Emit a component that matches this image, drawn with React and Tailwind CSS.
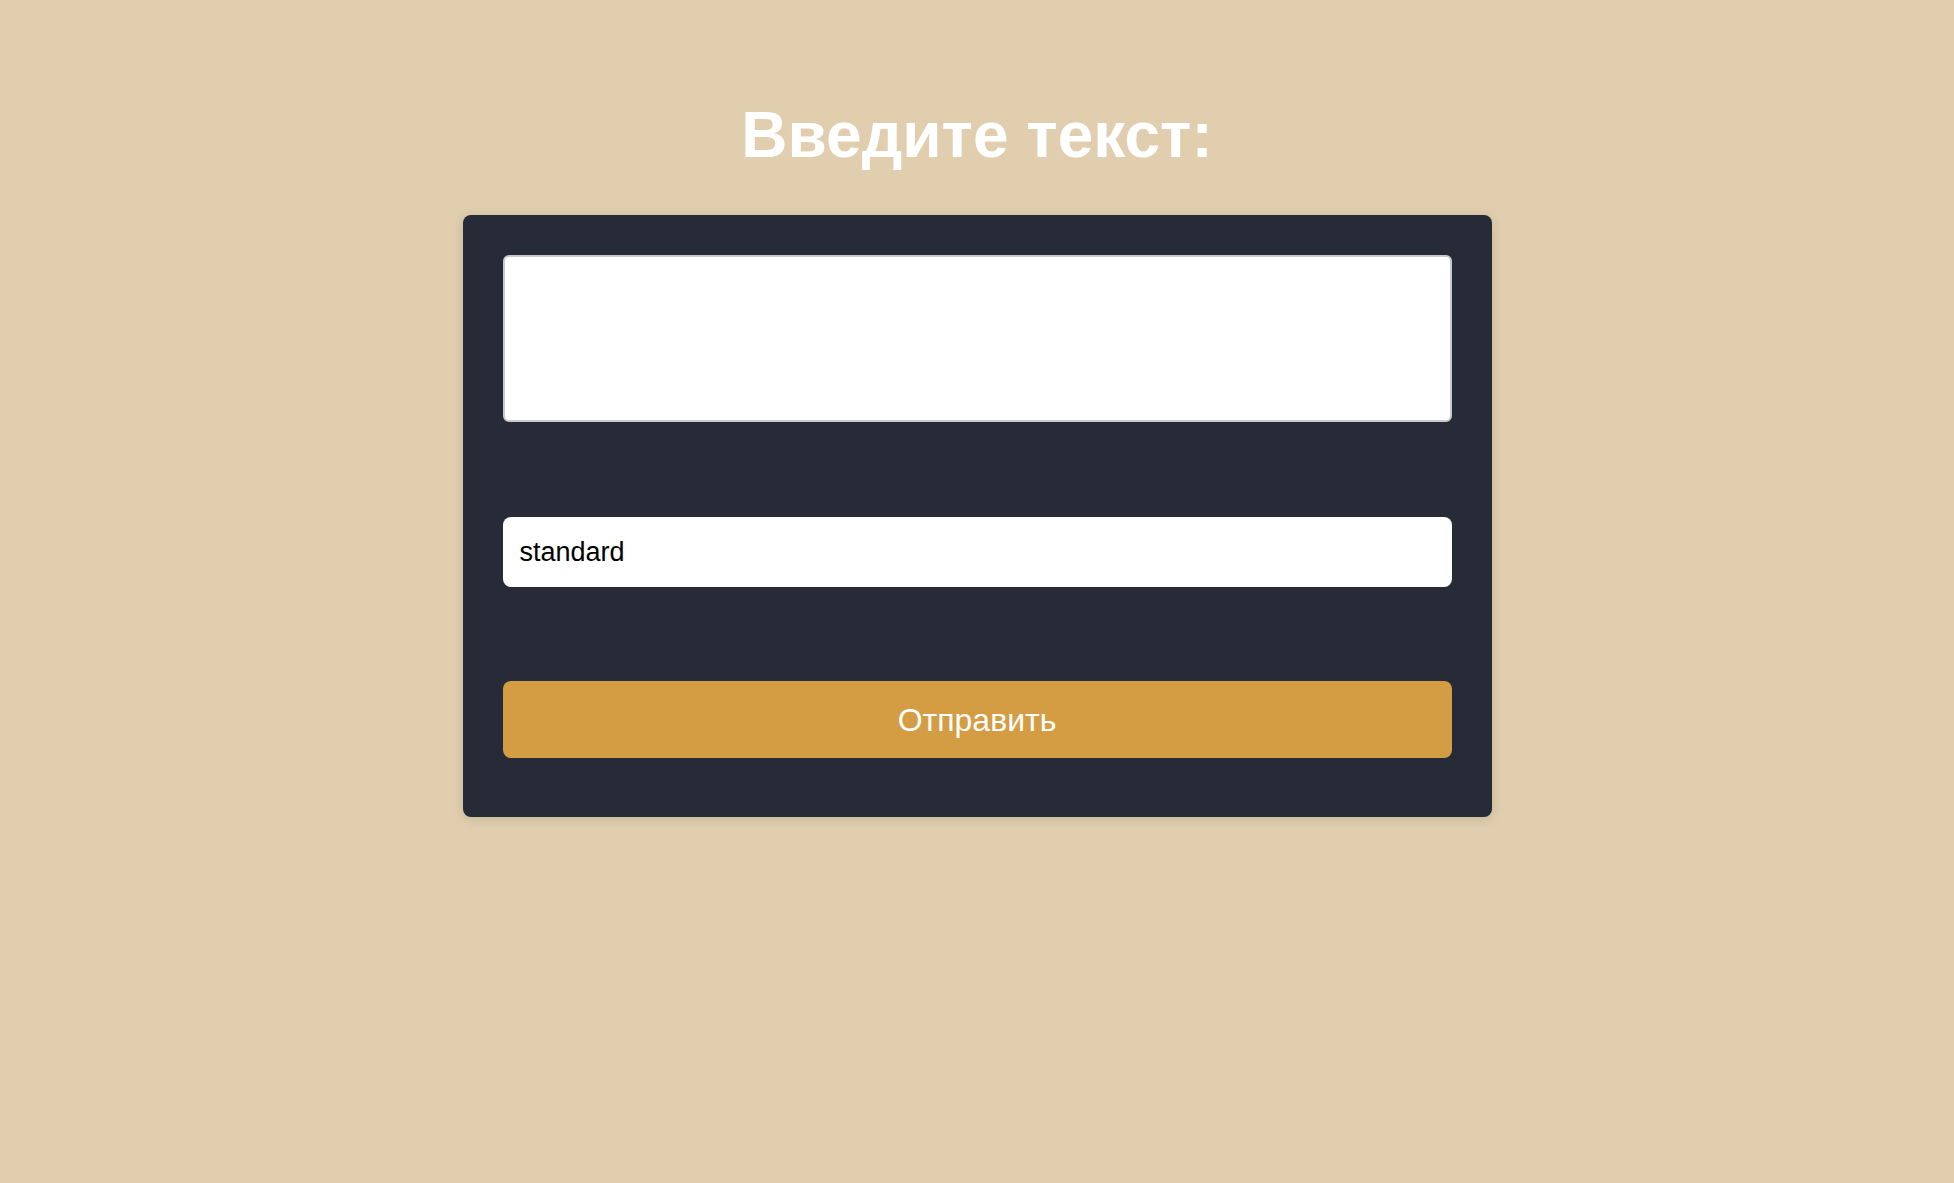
export default function App() {
  return (
    <div className="min-h-screen w-full bg-[#e0ceae] flex flex-col items-center" style={{ fontFamily: '"Liberation Sans", Arial, sans-serif' }}>
      <h1 className="mt-[103px] text-[64px] leading-none font-bold text-white">Введите текст:</h1>

      <div className="mt-[48px] w-[1029px] bg-[#272b38] rounded-lg shadow-[0_2px_12px_rgba(0,0,0,0.12)] px-10 pt-10 pb-[59px] flex flex-col">
        <textarea className="w-full h-[167px] bg-white border-2 border-[#c9c9c9] rounded-md resize-none focus:outline-none" />

        <input
          type="text"
          defaultValue="standard"
          className="mt-[95px] w-full h-[70px] bg-white rounded-lg px-[17px] text-[27px] text-black focus:outline-none"
        />

        <button className="mt-[94px] w-full h-[77px] bg-[#d49c43] rounded-lg text-[32px] text-white">
          Отправить
        </button>
      </div>
    </div>
  )
}
